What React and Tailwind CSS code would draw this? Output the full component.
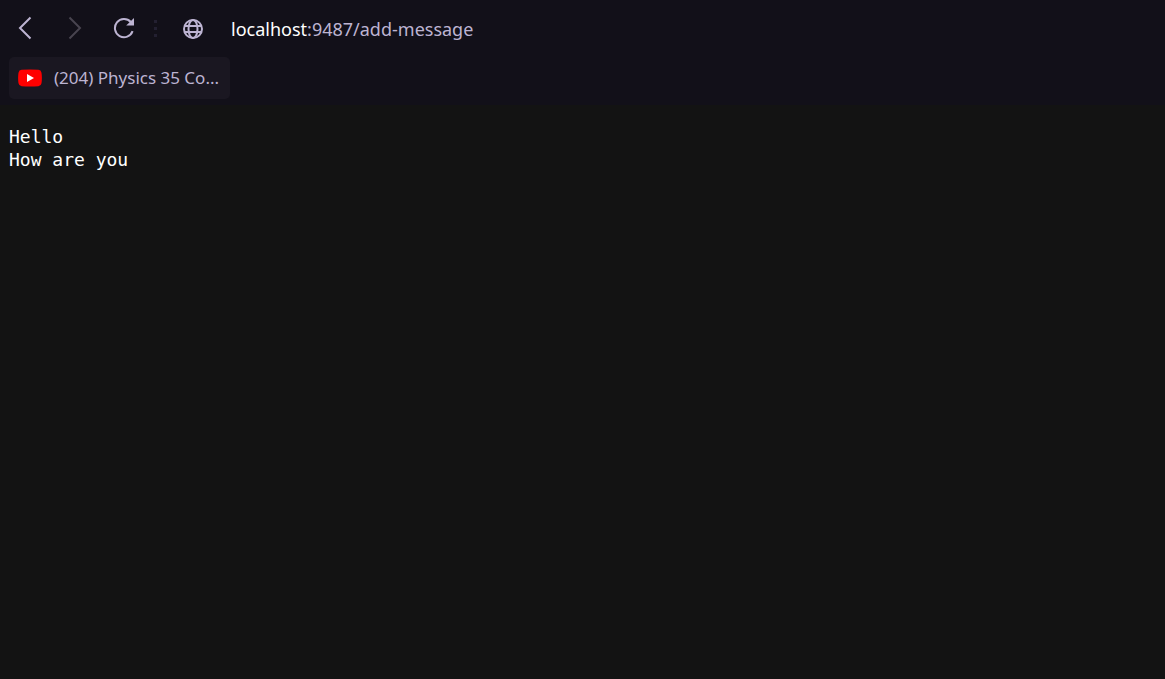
function Chevron({ points }) {
  return (
    <svg width="14" height="24" viewBox="0 0 14 24" fill="none" stroke="currentColor" strokeWidth="2" aria-hidden="true">
      <polyline points={points} />
    </svg>
  );
}

function ReloadIcon() {
  return (
    <svg width="22" height="22" viewBox="0 0 22 22" fill="none" aria-hidden="true">
      <path d="M19.6 14.2A9.1 9.1 0 1 1 17.8 5" stroke="currentColor" strokeWidth="2" />
      <path d="M21 1V8.6H13.2Z" fill="currentColor" />
    </svg>
  );
}

function GlobeIcon() {
  return (
    <svg width="20" height="20" viewBox="0 0 20 20" fill="none" stroke="currentColor" strokeWidth="2" aria-hidden="true">
      <circle cx="10" cy="10" r="9" />
      <ellipse cx="10" cy="10" rx="4.5" ry="9" />
      <path d="M1.8 7H18.2M1.8 13H18.2" />
    </svg>
  );
}

function YouTubeIcon() {
  return (
    <svg width="24" height="18" viewBox="0 0 24 18" aria-hidden="true">
      <path fill="#ff0000" d="M3.6.8Q12 0 20.4.8Q23 1 23.5 3.8Q24.3 9 23.5 14.2Q23 17 20.4 17.2Q12 18 3.6 17.2Q1 17 .5 14.2Q-.3 9 .5 3.8Q1 1 3.6.8Z" />
      <path fill="#ffffff" d="M9 5L16 9L9 13Z" />
    </svg>
  );
}

function Toolbar() {
  return (
    <div className="flex h-14 items-center text-[#bdb4d2]">
      <button type="button" aria-label="Back" className="flex w-[50px] justify-center">
        <Chevron points="12.5,1.5 2,12 12.5,22.5" />
      </button>
      <button type="button" aria-label="Forward" disabled className="flex w-[50px] justify-center text-[#48444f]">
        <Chevron points="1.5,1.5 12,12 1.5,22.5" />
      </button>
      <button type="button" aria-label="Reload" className="flex w-12 justify-center">
        <ReloadIcon />
      </button>
      <div className="ml-px flex w-3 flex-col items-center gap-1" aria-hidden="true">
        <span className="size-[3px] bg-[#232031]" />
        <span className="size-[3px] bg-[#232031]" />
        <span className="size-[3px] bg-[#232031]" />
      </div>
      <button type="button" aria-label="Site information" className="ml-[22px] pt-[2px]">
        <GlobeIcon />
      </button>
      <div
        role="textbox"
        aria-label="Address"
        contentEditable
        suppressContentEditableWarning
        spellCheck={false}
        className="ml-7 flex-1 pt-[2px] text-[18px] leading-7 whitespace-nowrap outline-none"
      >
        <span className="text-white">localhost</span>:9487/add-message
      </div>
    </div>
  );
}

function BookmarksBar() {
  return (
    <nav aria-label="Bookmarks" className="flex px-[9px] pt-px pb-[6px]">
      <a
        href="https://www.youtube.com/"
        className="flex h-[42px] w-[221px] items-center gap-3 rounded-[5px] bg-[#1a1721] pl-[9px] text-[17px] text-[#bdb4d2]"
      >
        <YouTubeIcon />
        <span className="whitespace-nowrap">(204) Physics 35 Co...</span>
      </a>
    </nav>
  );
}

export default function App() {
  return (
    <div className="flex min-h-screen flex-col bg-[#121019] font-['Noto_Sans','Open_Sans',sans-serif]">
      <header>
        <Toolbar />
        <BookmarksBar />
      </header>
      <main className="flex-1 bg-[#131313] px-[9px] pt-5">
        <pre className="font-['DejaVu_Sans_Mono',monospace] text-[18px] leading-[23px] text-white">
          {"Hello\nHow are you"}
        </pre>
      </main>
    </div>
  );
}
